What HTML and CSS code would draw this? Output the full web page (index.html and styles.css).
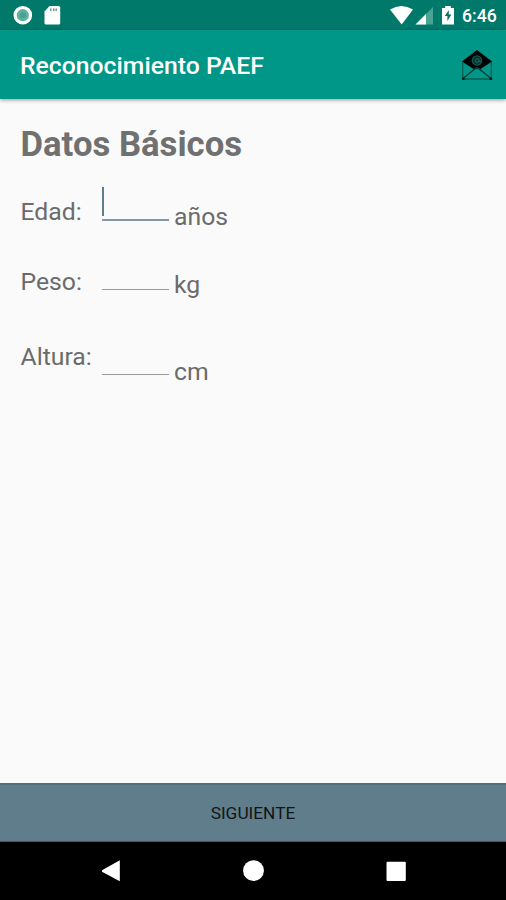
FILE: index.html
```
<!DOCTYPE html>
<html lang="es">
<head>
<meta charset="utf-8">
<title>Reconocimiento PAEF</title>
<link rel="stylesheet" href="styles.css">
</head>
<body>
<div class="screen">
  <header class="status">
    <svg class="status-left" width="62" height="30" viewBox="0 0 62 30">
      <circle cx="22.8" cy="15.2" r="7.700" fill="#5fb09f" stroke="#fff" stroke-width="3.200"/>
      <circle cx="22.8" cy="15.2" r="3" fill="#46a18e"/>
      <path d="M49.500 6h9q1.700 0 1.700 1.500v15.500q0 1.500-1.500 1.500H46q-1.500 0-1.500-1.500V11.500z" fill="#fff"/>
      <path d="M50 8.500h1.500v2.500H50zM53 8.500h1.500v2.500H53zM55.500 8.500h1.500v2.500h-1.500z" fill="#5c9d90"/>
    </svg>
    <svg class="status-right" width="68" height="30" viewBox="388 0 68 30">
      <path d="M390 9.500Q401.500 2.500 413 9.500L401.700 24.500z" fill="#fff"/>
      <path d="M433 7v17.500h-17.500z" fill="#4ba493"/>
      <path d="M426 14v10.500h-10.500z" fill="#fff"/>
      <path d="M442 8h3.200V6h5.600v2h3.200v16.500h-12z" fill="#fff"/>
      <path d="M448.800 10l-4 6h2.600v5l4-6.500h-2.600z" fill="#087365"/>
    </svg>
    <span class="clock">6:46</span>
  </header>
  <div class="appbar">
    <h1 class="title">Reconocimiento PAEF</h1>
    <svg class="mail" width="32" height="32" viewBox="461 48.500 32 32">
      <path d="M462.700 61v17.500h28.600V61" fill="none" stroke="#045f55" stroke-width="1.300"/>
      <path d="M462 61L477 49.500l15 11.500-11.500 7.500-3.500-1.800-3.500 1.800z" fill="#000"/>
      <path d="M463 78L474 69q3-2.500 6 0l11 9" fill="none" stroke="#033f38" stroke-width="1.400"/>
      <path d="M462 77h2.500v2.500H462zM489.700 77h2.500v2.500h-2.500z" fill="#00201c"/>
      <circle cx="477" cy="60" r="4.600" fill="#06362f" stroke="#11574e" stroke-width="1.400"/>
      <circle cx="477" cy="60" r="1.800" fill="none" stroke="#17675c"/>
      <path d="M478.800 58.500v2.500h2" fill="none" stroke="#17675c"/>
    </svg>
  </div>
  <main class="content">
    <h2 class="heading">Datos Básicos</h2>
    <div class="row row-age">
      <span class="label">Edad:</span>
      <span class="field focused"><span class="caret"></span></span>
      <span class="unit">años</span>
    </div>
    <div class="row row-weight">
      <span class="label">Peso:</span>
      <span class="field"></span>
      <span class="unit">kg</span>
    </div>
    <div class="row row-height">
      <span class="label">Altura:</span>
      <span class="field"></span>
      <span class="unit">cm</span>
    </div>
  </main>
  <button class="next" type="button">SIGUIENTE</button>
  <nav class="nav">
    <svg width="506" height="58" viewBox="0 842 506 58">
      <path d="M119.800 860.300v21L102 871.800v-1.600z" fill="#fff"/>
      <circle cx="253.500" cy="870.700" r="10.400" fill="#fff"/>
      <rect x="386.500" y="861.700" width="19.300" height="19.200" rx="1" fill="#fff"/>
    </svg>
  </nav>
</div>
</body>
</html>
```
FILE: styles.css
```
* { box-sizing: border-box; }
body {
  margin: 0;
  font-family: Roboto, "Liberation Sans", sans-serif;
  background: #fafafa;
}
.screen {
  width: 506px;
  height: 900px;
  display: flex;
  flex-direction: column;
  overflow: hidden;
}
svg { display: block; flex: none; }
.status {
  height: 30px;
  flex: none;
  display: flex;
  background: #00796b;
}
.status-right { margin-left: auto; }
.clock {
  width: 50px;
  padding-left: 6px;
  font-size: 17.6px;
  font-weight: 500;
  line-height: 32px;
  color: #fff;
}
.appbar {
  height: 69px;
  flex: none;
  display: flex;
  align-items: center;
  justify-content: space-between;
  padding: 0 13px 0 20px;
  background: #009688;
  box-shadow: 0 1px 4px rgba(0, 0, 0, .4);
}
.title {
  margin: 2px 0 0;
  font-size: 24.75px;
  font-weight: 500;
  line-height: 30px;
  color: #fff;
}
.content {
  flex: 1;
  padding: 24px 20px 0 20.5px;
  color: #6b6b6b;
}
.heading {
  margin: 0;
  font-size: 34.700px;
  font-weight: 700;
  line-height: 42px;
  color: #707070;
}
.row {
  display: grid;
  grid-template-columns: 81px 67.5px auto;
  align-items: start;
  font-size: 24.75px;
  line-height: 30px;
}
.row-age { height: 70px; padding-top: 32px; }
.row-weight { height: 75px; padding-top: 32px; }
.row-height { height: 80px; padding-top: 32px; }
.field { border-bottom: 1px solid #999; }
.row-age .field { height: 34px; margin-top: -10px; }
.row-weight .field { height: 23px; }
.row-height .field { height: 33px; }
.field.focused { border-bottom: 2px solid #7e98a9; }
.caret {
  display: block;
  width: 2px;
  height: 29px;
  background: #607d8b;
}
.unit { padding-left: 5px; }
.row-age .unit { margin-top: 5px; }
.row-weight .unit { margin-top: 3px; }
.row-height .unit { margin-top: 15px; }
.next {
  height: 59px;
  flex: none;
  padding: 0;
  border: 0;
  border-top: 2px solid #526e7a;
  border-bottom: 1px solid #405963;
  background: #607d8b;
  font-family: inherit;
  font-size: 17.3px;
  line-height: 20px;
  color: #101517;
}
.nav {
  height: 58px;
  flex: none;
  background: #000;
}
```
